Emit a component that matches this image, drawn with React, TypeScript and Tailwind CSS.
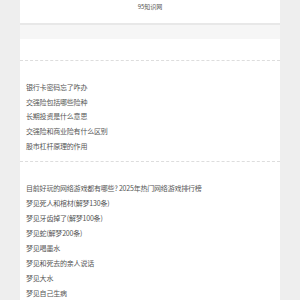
import React from "react";

const list1 = ["银行卡密码忘了咋办", "交强险包括哪些险种", "长期投资是什么意思", "交强险和商业险有什么区别", "股市杠杆原理的作用"];
const list2 = [
  "目前好玩的网络游戏都有哪些? 2025年热门网络游戏排行榜",
  "梦见死人和棺材(解梦130条)",
  "梦见牙齿掉了(解梦100条)",
  "梦见蛇(解梦200条)",
  "梦见喝墨水",
  "梦见和死去的亲人说话",
  "梦见大水",
  "梦见自己生病",
];

export default function App() {
  return (
    <div className="w-[300px] h-[300px] overflow-hidden bg-[#eeeeee]" style={{ fontFamily: '"Noto Sans CJK SC", "Noto Sans", sans-serif' }}>
      <div className="mx-[20px] w-[260px] h-[300px] bg-white">
        <div className="h-[23px] flex justify-center pt-[2px] text-[6px] leading-[10px] text-[#555]">95知识网</div>
        <div className="h-[2px] bg-[#e8e8e8]" />
        <div className="h-[14px] bg-[#f6f6f6]" />
        <div className="h-[22px] border-b border-dashed border-[#dddddd]" />
        <ul className="pt-[19px] pb-[7px] pl-[6px] border-b border-dashed border-[#dddddd] text-[7px] tracking-[-0.2px] leading-[14.7px] text-[#555]">
          {list1.map((t) => (
            <li key={t} className="whitespace-nowrap">{t}</li>
          ))}
        </ul>
        <ul className="pt-[19px] pl-[6px] text-[7px] tracking-[-0.2px] leading-[15px] text-[#555]">
          {list2.map((t) => (
            <li key={t} className="whitespace-nowrap">{t}</li>
          ))}
        </ul>
      </div>
    </div>
  );
}
